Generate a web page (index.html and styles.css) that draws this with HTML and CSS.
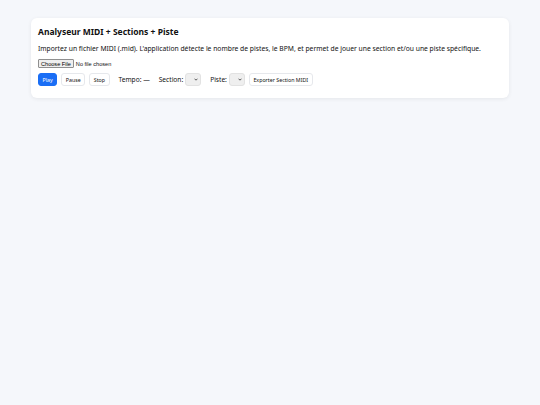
FILE: index.html
```html
<!DOCTYPE html>
<html lang="fr">
<head>
    <meta charset="UTF-8">
    <meta name="viewport" content="width=device-width, initial-scale=1.0">
    <title>Analyseur MIDI</title>
    <link rel="stylesheet" href="styles.css">
</head>
<body>
    <div class="card">
        <h2 class="title">Analyseur MIDI + Sections + Piste</h2>
        <p class="intro">Importez un fichier MIDI (.mid). L'application détecte le nombre de pistes, le BPM, et permet de jouer une section et/ou une piste spécifique.</p>
        <input type="file" id="midiFile" accept=".mid" class="file">
        <div class="controls">
            <button class="btn primary">Play</button>
            <button class="btn">Pause</button>
            <button class="btn">Stop</button>
            <span class="label">Tempo: —</span>
            <span class="label">Section:</span>
            <span class="pick">
                <select class="sel"></select>
                <svg class="arrow" width="4" height="3" viewBox="0 0 4 3"><path d="M0.5 0.7 L2 2.2 L3.5 0.7" fill="none" stroke="#333" stroke-width="0.8"/></svg>
            </span>
            <span class="label">Piste:</span>
            <span class="pick">
                <select class="sel"></select>
                <svg class="arrow" width="4" height="3" viewBox="0 0 4 3"><path d="M0.5 0.7 L2 2.2 L3.5 0.7" fill="none" stroke="#333" stroke-width="0.8"/></svg>
            </span>
            <button class="btn">Exporter Section MIDI</button>
        </div>
    </div>
</body>
</html>
```

FILE: styles.css
```css
body {
    margin: 0;
    background-color: #f5f7fb;
    font-family: "Noto Sans", "Open Sans", sans-serif;
    color: #111;
}

.card {
    width: 464px;
    margin: 18px auto;
    padding: 7px 7px 12px;
    background-color: #fff;
    border-radius: 6px;
    box-shadow: 0 1px 4px rgba(0, 0, 0, 0.07);
}

.title {
    font-size: 8.5px;
    font-weight: 700;
    margin: 0;
    line-height: 13px;
}

.intro {
    font-size: 6.75px;
    line-height: 10px;
    margin: 6px 0 0;
}

.file {
    display: block;
    height: 9px;
    font-family: "Liberation Sans", Arial, sans-serif;
    font-size: 5.6px;
    margin-top: 5px;
}

.file::file-selector-button {
    height: 9px;
    font-size: 5.6px;
    padding: 0 2px;
    margin-right: 2px;
    border: 1px solid #8f8f8f;
    border-radius: 1px;
    background-color: #efefef;
}

.controls {
    display: flex;
    align-items: center;
    gap: 4px;
    margin-top: 5px;
}

.btn {
    height: 13px;
    padding: 0 3.5px;
    font-family: "Noto Sans", sans-serif;
    font-size: 5.3px;
    background-color: #fff;
    color: #111;
    border: 1px solid #e6e8ec;
    border-radius: 3px;
    cursor: pointer;
}

.primary {
    background-color: #1a6ef5;
    border-color: #1a6ef5;
    color: #fff;
}

.label {
    font-size: 6.6px;
    margin-left: 5px;
}

.pick {
    position: relative;
    display: flex;
    margin-left: -2px;
}

.sel {
    appearance: none;
    width: 16px;
    height: 13px;
    margin: 0;
    border: 1px solid #e2e2e2;
    border-radius: 3px;
    background-color: #efefef;
}

.arrow {
    position: absolute;
    right: 3px;
    top: 5px;
    pointer-events: none;
}
```
